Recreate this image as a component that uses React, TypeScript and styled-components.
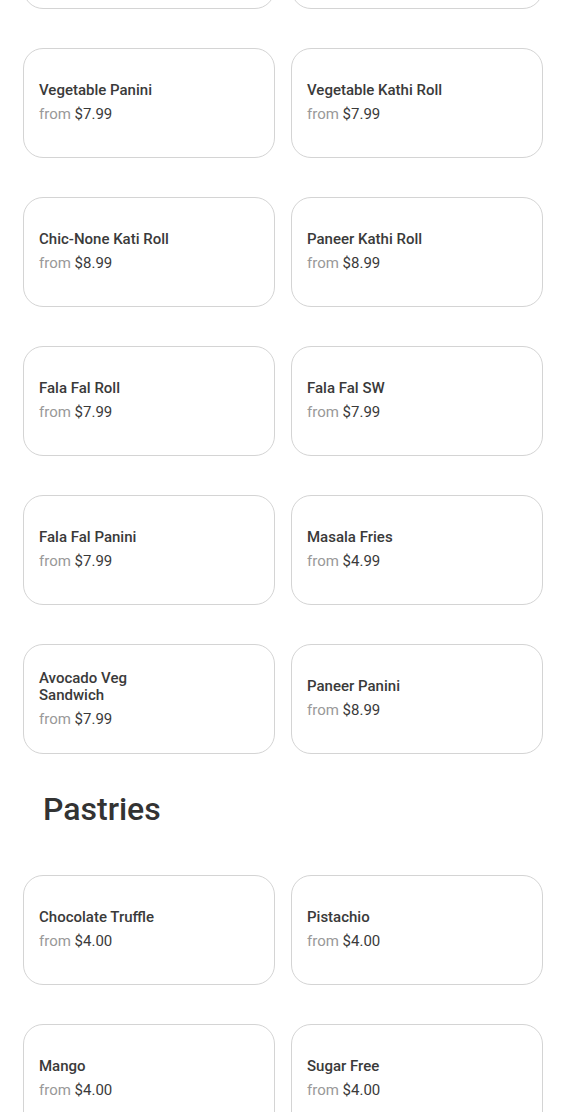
import React from "react";
import styled, { createGlobalStyle } from "styled-components";

const Global = createGlobalStyle`
  html, body { margin: 0; padding: 0; background: #fff; }
  body { font-family: Roboto, "Liberation Sans", Arial, sans-serif; -webkit-font-smoothing: antialiased; }
`;

const Page = styled.div`
  padding: 0 32px 40px 23px;
  margin-top: -101px;
`;

const Grid = styled.div`
  display: grid;
  grid-template-columns: 252px 252px;
  column-gap: 16px;
  row-gap: 39px;
`;

const Card = styled.div`
  box-sizing: border-box;
  height: 110px;
  border: 1px solid #d4d4d4;
  border-radius: 20px;
  padding: 0 15px 0;
  display: flex;
  flex-direction: column;
  justify-content: center;
  background: #fff;
`;

const Name = styled.div`
  font-size: 15px;
  line-height: 17px;
  font-weight: 500;
  color: #3a3a3a;
  max-width: 150px;
`;

const Price = styled.div`
  margin-top: 5px;
  font-size: 15px;
  line-height: 20px;
  color: #3a3a3a;
`;

const From = styled.span`
  color: #999;
`;

const Heading = styled.h2`
  margin: 35px 0 46px 20px;
  font-size: 32px;
  line-height: 40px;
  font-weight: 500;
  color: #333;
`;

const Spacer = styled.div`
  height: 39px;
`;

type Item = { name: string; price: string };

const sandwiches: Item[] = [
  { name: "", price: "" },
  { name: "", price: "" },
  { name: "Vegetable Panini", price: "$7.99" },
  { name: "Vegetable Kathi Roll", price: "$7.99" },
  { name: "Chic-None Kati Roll", price: "$8.99" },
  { name: "Paneer Kathi Roll", price: "$8.99" },
  { name: "Fala Fal Roll", price: "$7.99" },
  { name: "Fala Fal SW", price: "$7.99" },
  { name: "Fala Fal Panini", price: "$7.99" },
  { name: "Masala Fries", price: "$4.99" },
  { name: "Avocado Veg Sandwich", price: "$7.99" },
  { name: "Paneer Panini", price: "$8.99" },
];

const pastries: Item[] = [
  { name: "Chocolate Truffle", price: "$4.00" },
  { name: "Pistachio", price: "$4.00" },
  { name: "Mango", price: "$4.00" },
  { name: "Sugar Free", price: "$4.00" },
];

const ItemCard = ({ item }: { item: Item }) => (
  <Card>
    {item.name && <Name>{item.name}</Name>}
    {item.price && (
      <Price>
        <From>from</From> {item.price}
      </Price>
    )}
  </Card>
);

export default function App() {
  return (
    <>
      <Global />
      <Page>
        <Grid>
          {sandwiches.map((it, i) => (
            <ItemCard key={i} item={it} />
          ))}
        </Grid>
        <Heading>Pastries</Heading>
        <Grid>
          {pastries.map((it, i) => (
            <ItemCard key={i} item={it} />
          ))}
        </Grid>
        <Spacer />
      </Page>
    </>
  );
}
